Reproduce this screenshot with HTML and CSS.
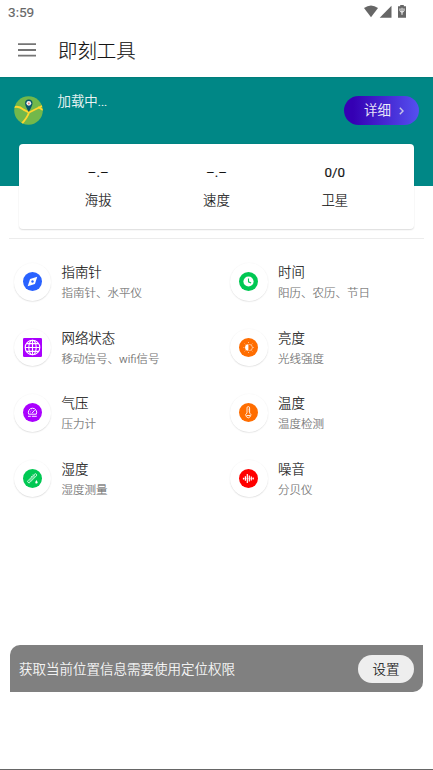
FILE: index.html
```html
<!DOCTYPE html>
<html lang="zh-CN">
<head>
<meta charset="utf-8">
<title>即刻工具</title>
<link rel="stylesheet" href="styles.css">
</head>
<body>
<div class="status">
  <span class="clock">3:59</span>
  <svg class="status-icons" width="44" height="14" viewBox="0 0 44 14" fill="#666">
    <path d="M0 3.1Q7 -2.3 14 3.1L7 12.2Z"/>
    <path d="M15.7 12.7H27.5V.8Z"/>
    <path d="M34 1.2h2.2V0h3.6v1.2H42v11.6h-8Z"/>
    <path d="M36 3.4v2.3q0 1.3 2 1.3t2-1.3V3.4M38 2.8v7" fill="none" stroke="#fff" stroke-width="1"/>
  </svg>
</div>
<header class="toolbar">
  <svg class="menu" width="18" height="14" viewBox="0 0 18 14" stroke="#757575" stroke-width="1.8"><path d="M0 1.2h18M0 7h18M0 12.7h18"/></svg>
  <h1>即刻工具</h1>
</header>
<section class="hero">
  <div class="location">
    <svg class="map" width="29" height="29" viewBox="0 0 29 29">
      <defs><clipPath id="disc"><circle cx="14.5" cy="14.5" r="14.3"/></clipPath></defs>
      <g clip-path="url(#disc)">
        <path fill="#72b84b" d="M0 0h29v29H0z"/>
        <path fill="none" stroke="#ffd62e" stroke-width="1.9" d="M0 11.2Q5 9.6 9.5 13.6L15 16.5L29 9.5M24 11L29 14M15 16.5Q13.5 21.5 7 28.5"/>
      </g>
      <path fill="#075569" d="M14.8 16Q10.9 9.5 11.1 7.2A3.7 3.7 0 0 1 18.5 7.2Q18.6 9.5 14.8 16Z"/>
      <circle cx="14.8" cy="7.3" r="2.4" fill="#f4eeee"/><circle cx="14.8" cy="7.5" r=".9" fill="#e27b70"/>
    </svg>
    <span class="place">加载中...</span>
    <div class="detail"><span>详细</span><svg width="5" height="8" viewBox="0 0 5 8" fill="none" stroke="#c8c4e8" stroke-width="1.4"><path d="M.8.8L4 4L.8 7.2"/></svg></div>
  </div>
  <div class="card">
    <div class="stat"><b>–.–</b><span>海拔</span></div>
    <div class="stat"><b>–.–</b><span>速度</span></div>
    <div class="stat"><b>0/0</b><span>卫星</span></div>
  </div>
</section>
<main class="tools">
  <div class="tool">
    <div class="ring"><svg viewBox="0 0 19 19"><circle cx="9.5" cy="9.5" r="9.5" fill="#2962ff"/><path fill="#fff" d="M14.3 4.7L11.9 11.9L4.7 14.3L7.1 7.1Z"/><circle cx="9.5" cy="9.5" r="1.2" fill="#2962ff"/></svg></div>
    <div class="label"><h2>指南针</h2><p>指南针、水平仪</p></div>
  </div>
  <div class="tool">
    <div class="ring"><svg viewBox="0 0 19 19"><circle cx="9.5" cy="9.5" r="9.5" fill="#00c853"/><circle cx="9.5" cy="9.5" r="5.1" fill="#fff"/><path d="M9.5 6.5v3.3l2.6 1.2" fill="none" stroke="#00c853" stroke-width="1.1"/></svg></div>
    <div class="label"><h2>时间</h2><p>阳历、农历、节日</p></div>
  </div>
  <div class="tool">
    <div class="ring"><svg viewBox="0 0 19 19"><rect width="19" height="19" rx="1.3" fill="#aa00ff"/><g fill="none" stroke="#fff" stroke-width="1.1"><circle cx="9.5" cy="9.5" r="7.3"/><ellipse cx="9.5" cy="9.5" rx="3.7" ry="7.3"/><path d="M9.5 2.2v14.6M2.2 9.5h14.6M3.5 5.6h12M3.5 13.4h12"/></g></svg></div>
    <div class="label"><h2>网络状态</h2><p>移动信号、wifi信号</p></div>
  </div>
  <div class="tool">
    <div class="ring"><svg viewBox="0 0 19 19"><circle cx="9.5" cy="9.5" r="9.5" fill="#ff6d00"/><path fill="#fff" d="M9.4 6.2v6.6a3.3 3.3 0 0 1 0-6.6Z"/><path d="M10.3 6.4a3.1 3.1 0 0 1 0 6.2M4.4 9.5h1M13.8 9.5h1M5.6 5.6l.8.8M5.6 13.4l.8-.8M13.4 5.6l-.8.8M13.4 13.4l-.8-.8M9.5 4v1M9.5 14v1" fill="none" stroke="#fff" stroke-width=".8" opacity=".7"/></svg></div>
    <div class="label"><h2>亮度</h2><p>光线强度</p></div>
  </div>
  <div class="tool">
    <div class="ring"><svg viewBox="0 0 19 19"><circle cx="9.5" cy="9.5" r="9.5" fill="#aa00ff"/><path d="M6.2 11.2H5.7A4.2 4.2 0 1 1 13.3 11.2H6.2M9 10.2L11.6 7.2M6.9 8.9h.8M8.6 6.8l.3.6M5 13.3h2.8M8.8 13.3h5" fill="none" stroke="#fff" stroke-width=".95"/></svg></div>
    <div class="label"><h2>气压</h2><p>压力计</p></div>
  </div>
  <div class="tool">
    <div class="ring"><svg viewBox="0 0 19 19"><circle cx="9.5" cy="9.5" r="9.5" fill="#ff6d00"/><path d="M8 10V4.9a1.3 1.3 0 0 1 2.6 0V10a2.5 2.5 0 1 1-2.6 0ZM10.6 6.2h-1.1M10.6 8h-1.1M7.6 12.5h3.4" fill="none" stroke="#fff" stroke-width=".85"/></svg></div>
    <div class="label"><h2>温度</h2><p>温度检测</p></div>
  </div>
  <div class="tool">
    <div class="ring"><svg viewBox="0 0 19 19"><circle cx="9.5" cy="9.5" r="9.5" fill="#00c853"/><path d="M5.3 11.4L11.5 5.2a1.2 1.2 0 0 1 1.8 1.7L7.1 13.2A1.3 1.3 0 1 1 5.3 11.4ZM6.3 12.2L12 6.5M8.3 7.2l.8.8M9.9 5.6l.8.8" fill="none" stroke="#fff" stroke-width=".8"/><path d="M13.4 10.9q1.8 2.3 1.2 3.1t-2.2.2Q11.7 13.4 13.4 10.9Z" fill="#fff"/></svg></div>
    <div class="label"><h2>湿度</h2><p>湿度测量</p></div>
  </div>
  <div class="tool">
    <div class="ring"><svg viewBox="0 0 19 19"><circle cx="9.5" cy="9.5" r="9.5" fill="#ff0000"/><path d="M4.5 8.7v1.7M6.4 7.2v4.6M8.3 5v9M10.3 6.5v6M12.3 7.6v3.8M14.2 8.5v2" stroke="#fff" stroke-width="1.2"/><path d="M4 9.5h11" stroke="#fff" stroke-width=".6" opacity=".6"/></svg></div>
    <div class="label"><h2>噪音</h2><p>分贝仪</p></div>
  </div>
</main>
<footer class="notice"><span>获取当前位置信息需要使用定位权限</span><div class="settings">设置</div></footer>
</body>
</html>
```

FILE: styles.css
```css
* { box-sizing: border-box; }
body {
  margin: 0;
  height: 770px;
  display: flex;
  flex-direction: column;
  overflow: hidden;
  background: #fff;
  border-bottom: 1px solid #666;
  color: #141414;
  font-family: Roboto, "Noto Sans CJK SC", sans-serif;
  font-weight: 300;
  -webkit-text-stroke: .15px currentColor;
}
h1, h2, p { margin: 0; font-weight: 300; }
svg { display: block; flex: none; }
.status { height: 24px; padding: 0 25px 0 8px; display: flex; justify-content: space-between; align-items: center; }
.clock { font-size: 13.6px; font-weight: 400; color: #666; line-height: 24px; }
.status-icons { margin-top: -1px; }
.toolbar { height: 53px; padding-left: 18px; display: flex; align-items: center; }
.menu { margin-top: -2px; }
.toolbar h1 { margin: 3px 0 0 22px; font-size: 19.4px; line-height: 28px; }
.hero {
  height: 162px;
  background: linear-gradient(#007b79, #008786 2px, #008786 109px, #fff 109px);
}
.location { height: 67px; padding: 0 14px; display: flex; align-items: center; }
.map { margin-right: 14.5px; }
.place { align-self: flex-start; margin-top: 15px; color: #fff; font-size: 13.4px; line-height: 20px; }
.detail {
  width: 75px; height: 29px; margin-left: auto; padding-left: 20px;
  display: flex; align-items: center; gap: 8px;
  border-radius: 15px; background: linear-gradient(90deg, #3500b4 12%, #5550f0);
  color: #fff; font-size: 13.4px; line-height: 20px;
}
.card {
  height: 85px; margin: 0 19px; padding: 18px 20px 0;
  display: grid; grid-template-columns: repeat(3, 1fr);
  border-radius: 4px; background: #fff;
  box-shadow: 0 .5px 1.5px rgba(0, 0, 0, .14);
}
.stat { display: flex; flex-direction: column; align-items: center; }
.stat b { font-size: 13.4px; font-weight: 400; line-height: 22px; }
.stat span { margin-top: 7px; font-size: 13.4px; line-height: 20px; }
.tools {
  margin-top: -1px;
  display: grid; grid-template-columns: 216.5px 216.5px;
  grid-template-rows: 11px; grid-auto-rows: 65.5px;
}
.tools::before { content: ""; grid-column: 1 / -1; height: 1px; margin: 0 9px; background: #ececec; }
.tool { display: flex; align-items: center; padding-left: 13.5px; }
.ring {
  width: 37.5px; height: 37.5px; margin-right: 10.5px; flex: none;
  display: grid; place-items: center; border-radius: 50%; background: #fff;
  box-shadow: 0 .6px 1.3px rgba(0, 0, 0, .15);
}
.ring svg { width: 19px; height: 19px; }
.label { margin-top: 2px; }
.label h2 { font-size: 13.4px; line-height: 20px; }
.label p { margin-top: 1px; color: #707070; font-size: 11.5px; line-height: 18px; }
.notice {
  height: 47px; margin: auto 10px 77px; padding: 0 9px;
  display: flex; align-items: center; justify-content: space-between;
  border-radius: 10px 0 10px 0; background: #808080;
  color: #fff; font-size: 13.5px; line-height: 20px;
}
.settings { width: 56px; height: 28px; border-radius: 14px; background: #eee; color: #141414; text-align: center; line-height: 28px; }
```
